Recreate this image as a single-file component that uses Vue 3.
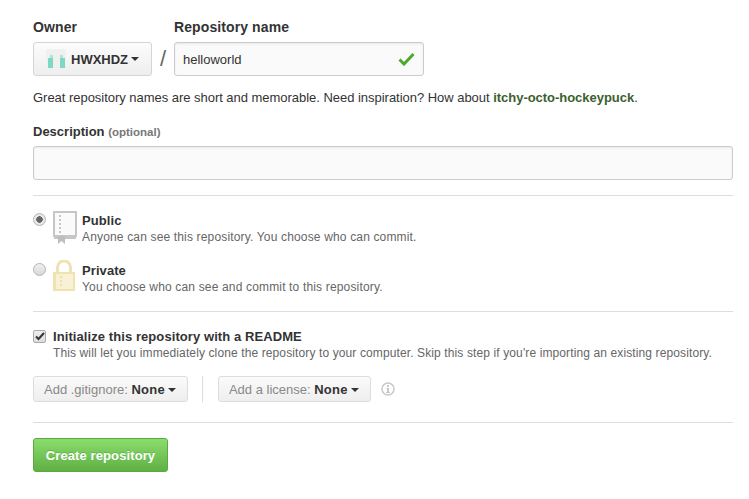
<script setup>
const options = [
  { id: 'public', title: 'Public', note: 'Anyone can see this repository. You choose who can commit.', checked: true },
  { id: 'private', title: 'Private', note: 'You choose who can see and commit to this repository.', checked: false }
]
</script>

<template>
  <form class="page" @submit.prevent>
    <div class="owner-row">
      <div class="field">
        <label class="label">Owner</label>
        <button type="button" class="owner-btn">
          <svg class="avatar" width="20" height="20" viewBox="0 0 20 20">
            <rect width="20" height="20" rx="2" fill="#f0f0f0" />
            <path d="M2 9h5v10H2zM14 9h5v10h-5z" fill="#7ed8c4" />
            <path d="M4 6h3v3H4zM14 6h3v3h-3z" fill="#a9e6d8" />
          </svg>
          <span>HWXHDZ</span>
          <i class="caret"></i>
        </button>
      </div>
      <span class="slash">/</span>
      <div class="field">
        <label class="label">Repository name</label>
        <div class="name-box">
          <span>helloworld</span>
          <svg width="17" height="14" viewBox="0 0 17 14">
            <path d="M1.5 7.500l4.500 4.500 9.500-10" fill="none" stroke="#4fa82e" stroke-width="3" />
          </svg>
        </div>
      </div>
    </div>

    <p class="hint">Great repository names are short and memorable. Need inspiration? How about <b class="suggest">itchy-octo-hockeypuck</b>.</p>

    <label class="label desc-label">Description <span class="optional">(optional)</span></label>
    <div class="desc-box"></div>

    <hr class="rule" />

    <div class="options">
      <div v-for="o in options" :key="o.id" class="option">
        <span class="radio" :class="{ on: o.checked }"></span>
        <svg v-if="o.id === 'public'" class="type-icon" width="24" height="33" viewBox="0 0 24 33">
          <path d="M1 1h22v24H1z" fill="#fafafa" stroke="#c6c6c6" stroke-width="2" />
          <path d="M1 25h22v3H1z" fill="#c6c6c6" />
          <path d="M6 4h2v2H6zM6 8h2v2H6zM6 12h2v2H6zM6 16h2v2H6zM6 20h2v2H6z" fill="#c6c6c6" />
          <path d="M5 25h7v8l-3.500-3-3.500 3z" fill="#bebebe" />
        </svg>
        <svg v-else class="type-icon lock" width="24" height="31" viewBox="0 0 24 31">
          <path d="M4.500 13V7.500a6.500 6.500 0 0 1 13 0V13" fill="none" stroke="#f0e3b0" stroke-width="3" />
          <path d="M0 12h22v19H0z" fill="#f0e3b0" />
          <path d="M3 14h17v15H3z" fill="#f8f1d6" />
          <path d="M7 16h2v2H7zM7 20h2v2H7zM7 24h2v2H7z" fill="#eedfae" />
        </svg>
        <div class="option-text">
          <div class="option-title">{{ o.title }}</div>
          <div class="note">{{ o.note }}</div>
        </div>
      </div>
    </div>

    <hr class="rule rule-mid" />

    <div class="init">
      <span class="check">
        <svg width="10" height="9" viewBox="0 0 10 9">
          <path d="M1 4.500l2.500 2.500 5.500-6" fill="none" stroke="#333" stroke-width="2" />
        </svg>
      </span>
      <div>
        <div class="option-title">Initialize this repository with a README</div>
        <div class="note note-long">This will let you immediately clone the repository to your computer. Skip this step if you're importing an existing repository.</div>
      </div>
    </div>

    <div class="addons">
      <button type="button" class="addon">Add .gitignore: <b>None</b><i class="caret"></i></button>
      <span class="divider"></span>
      <button type="button" class="addon">Add a license: <b>None</b><i class="caret"></i></button>
      <svg class="info" width="14" height="14" viewBox="0 0 14 14">
        <circle cx="7" cy="7" r="6" fill="none" stroke="#c8c8c8" stroke-width="1.500" />
        <path d="M6 3h2v2H6zM5.500 6H8v4h1v1H5V10h1V7h-.5z" fill="#c8c8c8" />
      </svg>
    </div>

    <hr class="rule rule-low" />

    <button type="button" class="create">Create repository</button>
  </form>
</template>

<style>
html,
body {
  background: #fff;
}
</style>

<style scoped>
.page {
  box-sizing: border-box;
  width: 749px;
  height: 499px;
  padding: 19px 16px 0 33px;
  overflow: hidden;
  font-family: "Liberation Sans", Arial, sans-serif;
  font-size: 13px;
  color: #333;
}

.owner-row {
  display: flex;
  align-items: flex-end;
}

.field {
  display: flex;
  flex-direction: column;
}

.label {
  display: block;
  font-size: 13px;
  font-weight: bold;
  line-height: 17px;
  color: #333;
}

.field .label {
  margin-bottom: 6px;
  font-size: 14px;
  letter-spacing: 0.1px;
}

.owner-btn {
  display: flex;
  align-items: center;
  box-sizing: border-box;
  width: 119px;
  height: 34px;
  padding: 0 0 0 12px;
  border: 1px solid #d5d5d5;
  border-radius: 3px;
  background: linear-gradient(#fcfcfc, #eee);
  font: bold 13px "Liberation Sans", Arial, sans-serif;
  color: #333;
}

.avatar {
  margin-right: 5px;
}

.caret {
  display: inline-block;
  width: 0;
  height: 0;
  margin-left: 3px;
  border: 4px solid transparent;
  border-top-color: #333;
  border-bottom: 0;
  vertical-align: middle;
}

.slash {
  width: 22px;
  height: 34px;
  font-size: 22px;
  line-height: 34px;
  text-align: center;
  color: #666;
}

.name-box {
  display: flex;
  align-items: center;
  justify-content: space-between;
  box-sizing: border-box;
  width: 250px;
  height: 34px;
  padding: 0 8px;
  border: 1px solid #ccc;
  border-radius: 3px;
  background: #fafafa;
  box-shadow: inset 0 1px 2px rgba(0, 0, 0, 0.075);
  font-size: 13px;
  color: #333;
}

.hint {
  margin: 14px 0 0;
  line-height: 16px;
  font-size: 13px;
  letter-spacing: -0.03px;
  color: #333;
}

.suggest {
  color: #3b5f2c;
}

.desc-label {
  margin-top: 17px;
}

.optional {
  font-size: 11.5px;
  color: #777;
}

.desc-box {
  box-sizing: border-box;
  width: 700px;
  height: 34px;
  margin-top: 5px;
  border: 1px solid #ccc;
  border-radius: 3px;
  background: #fafafa;
  box-shadow: inset 0 1px 2px rgba(0, 0, 0, 0.075);
}

.rule {
  width: 700px;
  height: 1px;
  margin: 15px 0;
  border: 0;
  background: #ddd;
}

.rule-mid {
  margin: 17px 0 16px;
}

.rule-low {
  margin-top: 20px;
}

.options {
  display: flex;
  flex-direction: column;
  gap: 17px;
}

.option {
  display: flex;
  align-items: flex-start;
  height: 33px;
}

.radio {
  box-sizing: border-box;
  flex: none;
  width: 13px;
  height: 13px;
  margin: 2px 7px 0 0;
  border: 1px solid #b4b4b4;
  border-radius: 50%;
  background: linear-gradient(#f0f0f0, #d8d8d8);
}

.radio.on {
  background: radial-gradient(circle, #666 0 3px, #e8e8e8 3.500px);
}

.type-icon {
  flex: none;
  margin-right: 5px;
}

.lock {
  margin-top: -1px;
}

.option-title {
  font-size: 13px;
  font-weight: bold;
  line-height: 18px;
  letter-spacing: 0.08px;
  color: #333;
}

.note {
  font-size: 12px;
  line-height: 15px;
  letter-spacing: 0.16px;
  color: #666;
}

.note-long {
  letter-spacing: 0.115px;
}

.option-text {
  margin-top: 1px;
}

.init {
  display: flex;
  align-items: flex-start;
}

.check {
  display: flex;
  align-items: center;
  justify-content: center;
  box-sizing: border-box;
  flex: none;
  width: 13px;
  height: 13px;
  margin: 2px 7px 0 0;
  border: 1px solid #aaa;
  border-radius: 2px;
  background: linear-gradient(#eee, #ddd);
}

.addons {
  display: flex;
  align-items: center;
  margin-top: 15px;
}

.addon {
  box-sizing: border-box;
  height: 26px;
  padding: 0 11px 0 10px;
  border: 1px solid #ddd;
  border-radius: 3px;
  background: linear-gradient(#fafafa, #eee);
  font: 13px "Liberation Sans", Arial, sans-serif;
  color: #888;
  white-space: nowrap;
}

.addon b {
  letter-spacing: 0.25px;
  color: #333;
}

.divider {
  width: 1px;
  height: 26px;
  margin: 0 15px 0 14px;
  background: #ddd;
}

.info {
  margin-left: 10px;
}

.create {
  display: block;
  box-sizing: border-box;
  width: 135px;
  height: 34px;
  padding: 0;
  border: 1px solid #5ca941;
  border-radius: 3px;
  background: linear-gradient(#8add6d, #60b044);
  font: bold 13px "Liberation Sans", Arial, sans-serif;
  letter-spacing: 0.1px;
  color: #fff;
  text-shadow: 0 -1px 0 rgba(0, 0, 0, 0.15);
}
</style>
